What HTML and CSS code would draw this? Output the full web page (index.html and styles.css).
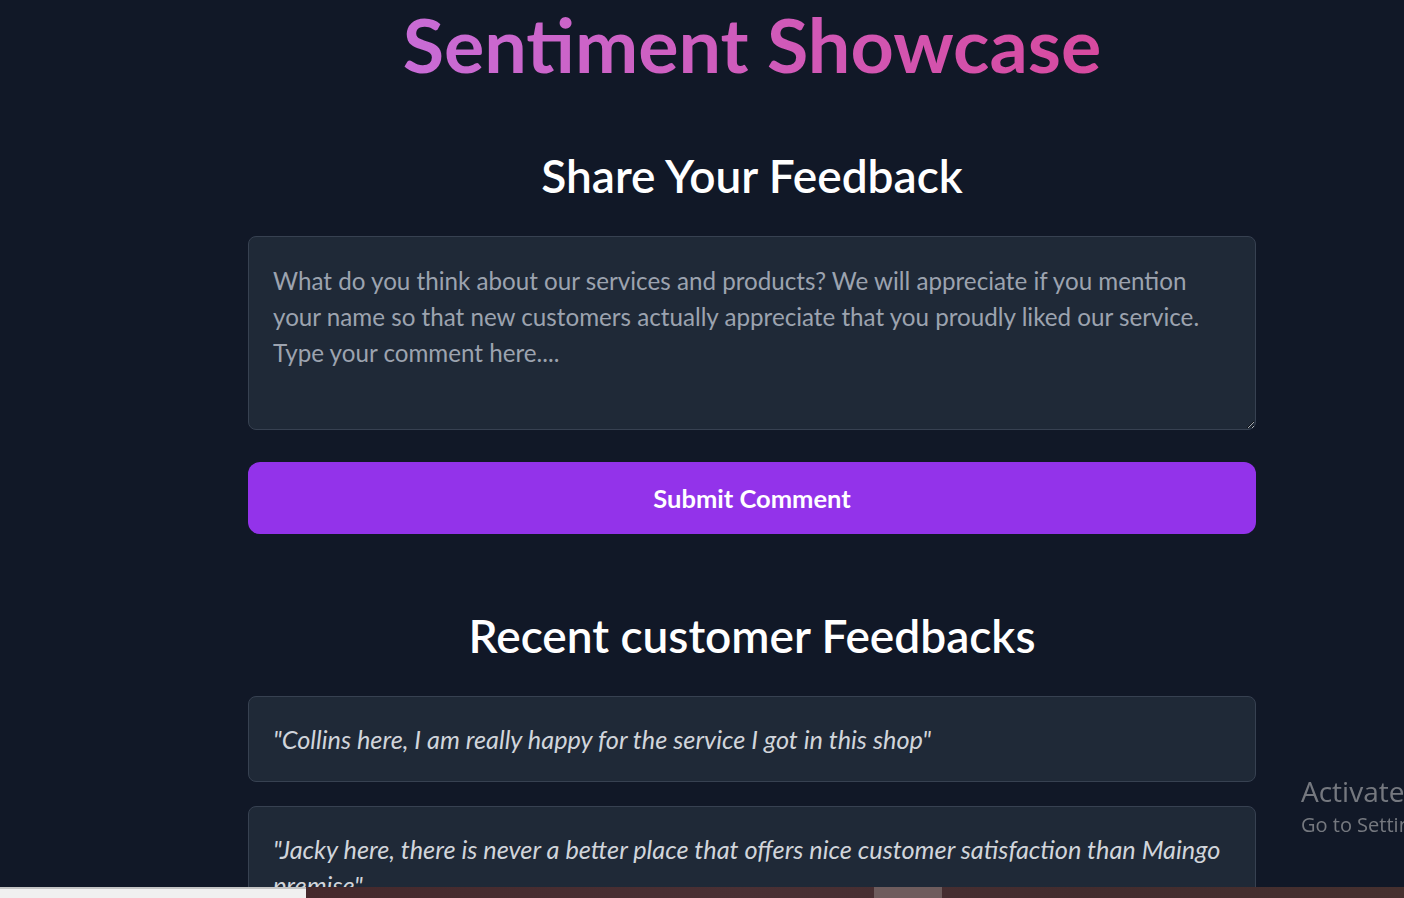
FILE: index.html
```html
<!DOCTYPE html>
<html lang="en">
<head>
<meta charset="utf-8">
<title>Sentiment Showcase</title>
<link rel="stylesheet" href="styles.css">
</head>
<body>
<div class="page">
  <main class="container">
    <h1 class="title"><span class="title-text">Sentiment Showcase</span></h1>

    <section class="feedback">
      <h2 class="heading">Share Your Feedback</h2>
      <textarea class="comment" rows="4" placeholder="What do you think about our services and products? We will appreciate if you mention&#10;your name so that new customers actually appreciate that you proudly liked our service.&#10;Type your comment here...."></textarea>
      <button class="submit" type="button">Submit Comment</button>
    </section>

    <section class="recent">
      <h2 class="heading">Recent customer Feedbacks</h2>
      <div class="cards">
        <div class="card"><p>"Collins here, I am really happy for the service I got in this shop"</p></div>
        <div class="card"><p>"Jacky here, there is never a better place that offers nice customer satisfaction than Maingo premise"</p></div>
      </div>
    </section>
  </main>
</div>

<div class="watermark">
  <div class="wm-title">Activate Windows</div>
  <div class="wm-sub">Go to Settings to activate Windows.</div>
</div>

<div class="taskbar">
  <div class="tb-search"></div>
  <div class="tb-rest"><div class="tb-app"></div></div>
</div>
</body>
</html>
```

FILE: styles.css
```css
html, body {
  margin: 0;
  padding: 0;
  height: 100%;
  overflow: hidden;
}

body {
  background: #111827;
  font-family: Lato, "Open Sans", sans-serif;
  color: #ffffff;
}

.page {
  width: 1504px;
}

.container {
  width: 1008px;
  margin: 0 auto;
  display: flex;
  flex-direction: column;
}

.title {
  margin: 0;
  padding-top: 4px;
  text-align: center;
  font-size: 75.5px;
  line-height: 80px;
  font-weight: 700;
}

.title-text {
  display: inline-block;
  background-image: linear-gradient(90deg, #c86cd6, #d74a9f);
  -webkit-background-clip: text;
  background-clip: text;
  color: transparent;
}

.heading {
  margin: 0;
  text-align: center;
  font-size: 46px;
  line-height: 56px;
  font-weight: 600;
  color: #ffffff;
}

.feedback {
  display: flex;
  flex-direction: column;
  padding-top: 64px;
}

.feedback .heading {
  margin-bottom: 32px;
}

.comment {
  box-sizing: border-box;
  width: 100%;
  height: 194px;
  padding: 26px 24px;
  background: #1f2937;
  border: 1px solid #374151;
  border-radius: 8px;
  color: #e5e7eb;
  font-family: inherit;
  font-size: 24.2px;
  line-height: 36px;
  resize: vertical;
  outline: none;
}

.comment::placeholder {
  color: #9ca3af;
  opacity: 1;
}

.submit {
  margin-top: 32px;
  height: 72px;
  border: none;
  border-radius: 12px;
  background: #9333ea;
  color: #ffffff;
  font-family: inherit;
  font-size: 25.5px;
  font-weight: 700;
  cursor: pointer;
}

.recent {
  padding-top: 74px;
  display: flex;
  flex-direction: column;
}

.recent .heading {
  margin-bottom: 32px;
}

.cards {
  display: flex;
  flex-direction: column;
  gap: 24px;
}

.card {
  background: #1f2937;
  border: 1px solid #374151;
  border-radius: 8px;
  padding: 24px;
}

.card p {
  margin: 0;
  font-size: 25.3px;
  line-height: 36px;
  font-style: italic;
  color: #d1d5db;
}

.watermark {
  position: fixed;
  left: 1301px;
  top: 772px;
  white-space: nowrap;
  color: rgba(200, 200, 200, 0.55);
  font-family: "Open Sans", sans-serif;
}

.wm-title {
  font-size: 28px;
  line-height: 38px;
}

.wm-sub {
  font-size: 20px;
  line-height: 30px;
}

.taskbar {
  position: fixed;
  left: 0;
  right: 0;
  bottom: 0;
  height: 11px;
  display: flex;
}

.tb-search {
  width: 306px;
  background: #f0f0f0;
  border-top: 2px solid #c4c4c4;
  box-sizing: border-box;
}

.tb-rest {
  flex: 1;
  background: linear-gradient(90deg, #45292c, #4a3034 40%, #432c2e 70%, #46302f);
  padding-left: 568px;
}

.tb-app {
  width: 68px;
  height: 100%;
  background: #6e5c5d;
}
```
